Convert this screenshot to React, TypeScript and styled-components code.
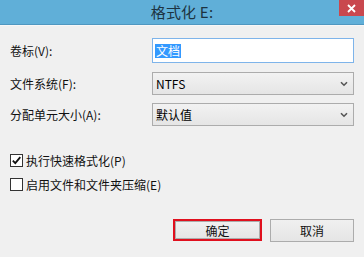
import React from "react";
import styled, { createGlobalStyle } from "styled-components";

const Global = createGlobalStyle`
  html, body { margin: 0; padding: 0; background: #f0f0f0; }
  body { font-family: "Microsoft YaHei", "Noto Sans CJK SC", "Noto Sans", sans-serif; }
  * { box-sizing: border-box; }
`;

const Window = styled.div`
  width: 364px;
  height: 257px;
  background: #f0f0f0;
  display: flex;
  flex-direction: column;
  overflow: hidden;
`;

const TitleBar = styled.div`
  height: 25px;
  background: #60afd8;
  border-bottom: 1px solid #4f97c0;
  display: grid;
  grid-template-columns: 1fr auto 1fr;
`;

const Title = styled.div`
  grid-column: 2;
  font-size: 15px;
  line-height: 24px;
  color: #1d3341;
  letter-spacing: 0.2px;
`;

const CloseButton = styled.div`
  grid-column: 3;
  justify-self: end;
  width: 25px;
  height: 16px;
  background: #c9484e;
  display: flex;
  align-items: center;
  justify-content: center;
`;

const Body = styled.div`
  flex: 1;
  padding: 12px 10px 0 10px;
  border-top: 1px solid #f7f7f7;
  display: flex;
  flex-direction: column;
`;

const Form = styled.div`
  display: grid;
  grid-template-columns: 142px 1fr;
  align-items: center;
`;

const Label = styled.div<{ $mt?: number }>`
  font-size: 12px;
  color: #111;
  margin-top: ${(p) => p.$mt ?? 0}px;
`;

const TextBox = styled.div`
  height: 25px;
  border: 1px solid #7eb4ea;
  background: #fff;
  padding: 3px 2px;
  display: flex;
  align-items: center;
`;

const Selected = styled.span`
  background: #3399ff;
  color: #fff;
  font-size: 12px;
  line-height: 14px;
  height: 14px;
  padding: 0 1px;
`;

const Select = styled.div<{ $mt?: number }>`
  height: 23px;
  margin-top: ${(p) => p.$mt ?? 0}px;
  border: 1px solid #acacac;
  background: linear-gradient(#f2f2f2, #e5e5e5);
  display: flex;
  align-items: center;
  justify-content: space-between;
  padding: 0 5px 0 3px;
  font-size: 12px;
  color: #000;
`;

const Checks = styled.div`
  margin-top: 28px;
  display: flex;
  flex-direction: column;
  gap: 11px;
`;

const CheckRow = styled.div`
  display: flex;
  align-items: center;
  gap: 3px;
  font-size: 12px;
  color: #111;
  height: 13px;
`;

const Box = styled.div`
  width: 13px;
  height: 13px;
  border: 1px solid #333;
  background: #fff;
  display: flex;
  align-items: center;
  justify-content: center;
  flex: none;
`;

const Buttons = styled.div`
  margin-top: 28px;
  display: flex;
  justify-content: flex-end;
  align-items: flex-start;
  gap: 8px;
`;

const Focus = styled.div`
  border: 2px solid #e0101e;
  display: flex;
`;

const Button = styled.div<{ $w: number; $h: number }>`
  width: ${(p) => p.$w}px;
  height: ${(p) => p.$h}px;
  border: 1px solid #acacac;
  background: linear-gradient(#f0f0f0, #e5e5e5);
  display: flex;
  align-items: center;
  justify-content: center;
  font-size: 12px;
  color: #111;
`;

const Chevron = () => (
  <svg width="8" height="6" viewBox="0 0 8 6">
    <path d="M1 1.2 L4 4.2 L7 1.2" fill="none" stroke="#555" strokeWidth="1.6" />
  </svg>
);

const Check = () => (
  <svg width="11" height="11" viewBox="0 0 11 11">
    <path d="M1.8 5.6 L4.3 8.2 L9.3 2.2" fill="none" stroke="#111" strokeWidth="1.8" />
  </svg>
);

export default function App() {
  return (
    <>
      <Global />
      <Window>
        <TitleBar>
          <Title>格式化 E:</Title>
          <CloseButton>
            <svg width="9" height="9" viewBox="0 0 9 9">
              <path d="M1 1 L8 8 M8 1 L1 8" stroke="#fff" strokeWidth="1.8" />
            </svg>
          </CloseButton>
        </TitleBar>
        <Body>
          <Form>
            <Label>卷标(V):</Label>
            <TextBox>
              <Selected>文档</Selected>
            </TextBox>
            <Label $mt={9}>文件系统(F):</Label>
            <Select $mt={9}>
              NTFS
              <Chevron />
            </Select>
            <Label $mt={8}>分配单元大小(A):</Label>
            <Select $mt={8}>
              默认值
              <Chevron />
            </Select>
          </Form>
          <Checks>
            <CheckRow>
              <Box>
                <Check />
              </Box>
              执行快速格式化(P)
            </CheckRow>
            <CheckRow>
              <Box />
              启用文件和文件夹压缩(E)
            </CheckRow>
          </Checks>
          <Buttons>
            <Focus>
              <Button $w={85} $h={18}>确定</Button>
            </Focus>
            <Button $w={84} $h={23}>取消</Button>
          </Buttons>
        </Body>
      </Window>
    </>
  );
}
